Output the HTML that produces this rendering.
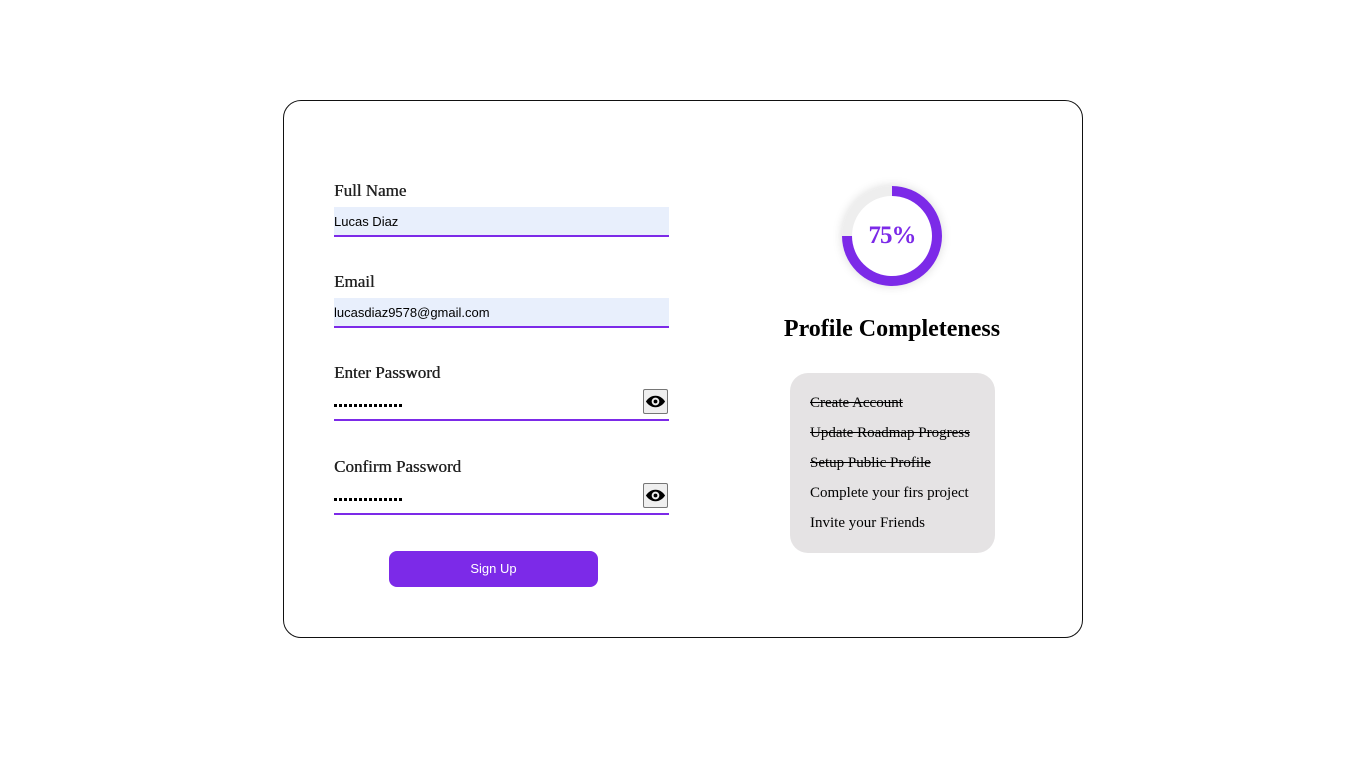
<!DOCTYPE html>
<html><head><style>
body{margin:0;width:1366px;height:757px;background:#fff;position:relative;font-family:"Liberation Serif",serif;}
.card{position:absolute;left:283px;top:100px;width:798px;height:536px;border:1px solid #111;border-radius:18px;}
.lbl{position:absolute;left:334px;font-size:17px;color:#222;text-shadow:0.4px 0 0 #222;}
.inp{position:absolute;left:334px;width:335px;height:28px;background:#e8effc;border-bottom:2px solid #7c2ae8;font-family:"Liberation Sans",sans-serif;font-size:13px;line-height:29px;color:#000;}
.pw{position:absolute;left:334px;width:335px;height:30px;border-bottom:2px solid #7c2ae8;}
.dots{position:absolute;left:0;top:15px;width:70px;height:3px;background:repeating-linear-gradient(90deg,#000 0 3px,transparent 3px 5px);}
.eye{position:absolute;right:1px;top:0;width:25px;height:25px;background:#efefef;border:1px solid #767676;border-radius:2px;box-sizing:border-box;}
.btn{position:absolute;left:389px;top:551px;width:209px;height:36px;background:#7c2ae8;border-radius:8px;color:#fff;font-family:"Liberation Sans",sans-serif;font-size:13px;text-align:center;line-height:36px;}
.ring{position:absolute;left:842px;top:186px;width:100px;height:100px;border-radius:50%;background:conic-gradient(#7c2ae8 0 75%,#eee 75% 100%);box-shadow:0 0 10px rgba(0,0,0,.15);}
.ring .in{position:absolute;left:10px;top:10px;width:80px;height:80px;border-radius:50%;background:#fff;text-align:center;line-height:80px;font-size:25px;font-weight:bold;color:#7c2ae8;letter-spacing:-1px;}
.title{position:absolute;left:773px;top:316px;width:238px;text-align:center;font-size:24px;font-weight:bold;}
.list{position:absolute;left:790px;top:373px;width:205px;height:180px;background:#e5e3e4;border-radius:18px;font-size:15px;}
.list div{position:absolute;left:20px;white-space:nowrap;}
</style></head><body>
<div class="card"></div>
<div class="lbl" style="top:181px">Full Name</div>
<div class="inp" style="top:207px">Lucas Diaz</div>
<div class="lbl" style="top:272px">Email</div>
<div class="inp" style="top:298px">lucasdiaz9578@gmail.com</div>
<div class="lbl" style="top:363px">Enter Password</div>
<div class="pw" style="top:389px"><span class="dots"></span><div class="eye"><svg width="23" height="23" viewBox="0 0 24 24"><path d="M12 6C7 6 3.5 9.5 2 12c1.5 2.5 5 6 10 6s8.5-3.5 10-6c-1.5-2.5-5-6-10-6zm0 10a4 4 0 1 1 0-8 4 4 0 0 1 0 8zm0-6a2 2 0 1 0 0 4 2 2 0 0 0 0-4z" fill="#000"/></svg></div></div>
<div class="lbl" style="top:457px">Confirm Password</div>
<div class="pw" style="top:483px"><span class="dots"></span><div class="eye"><svg width="23" height="23" viewBox="0 0 24 24"><path d="M12 6C7 6 3.5 9.5 2 12c1.5 2.5 5 6 10 6s8.5-3.5 10-6c-1.5-2.5-5-6-10-6zm0 10a4 4 0 1 1 0-8 4 4 0 0 1 0 8zm0-6a2 2 0 1 0 0 4 2 2 0 0 0 0-4z" fill="#000"/></svg></div></div>
<div class="btn">Sign Up</div>
<div class="ring"><div class="in">75%</div></div>
<div class="title">Profile Completeness</div>
<div class="list">
<div style="top:22px;text-decoration:line-through">Create Account</div>
<div style="top:52px;text-decoration:line-through">Update Roadmap Progress</div>
<div style="top:82px;text-decoration:line-through">Setup Public Profile</div>
<div style="top:112px">Complete your firs project</div>
<div style="top:142px">Invite your Friends</div>
</div>
</body></html>
